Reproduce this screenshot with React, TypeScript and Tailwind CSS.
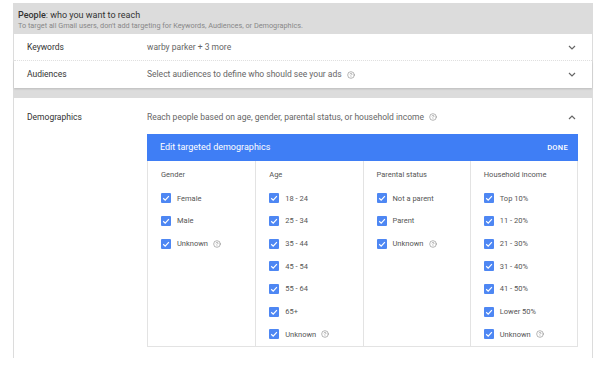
import { CircleHelp } from 'lucide-react';

const font = { fontFamily: 'Roboto, "Liberation Sans", sans-serif' };

const Chevron = ({ up = false }: { up?: boolean }) => (
  <div className="flex w-[12px] justify-center">
    <svg width="8" height="5" viewBox="0 0 8 5" className={up ? 'rotate-180' : ''}>
      <path d="M1 1 L4 4 L7 1" fill="none" stroke="#666" strokeWidth="1.2" />
    </svg>
  </div>
);

const Help = () => <CircleHelp size={8} strokeWidth={1.6} className="ml-[5px] text-[#777]" />;

const Check = () => (
  <svg width="10" height="10" viewBox="0 0 10 10" className="shrink-0">
    <rect x="0" y="0" width="10" height="10" rx="1" fill="#4e87f3" />
    <path d="M2.2 5.2 L4.2 7.1 L7.9 3.1" fill="none" stroke="#fff" strokeWidth="1.2" />
  </svg>
);

type Option = { label: string; help?: boolean };

const columns: { title: string; options: Option[] }[] = [
  { title: 'Gender', options: [{ label: 'Female' }, { label: 'Male' }, { label: 'Unknown', help: true }] },
  {
    title: 'Age',
    options: [
      { label: '18 - 24' },
      { label: '25 - 34' },
      { label: '35 - 44' },
      { label: '45 - 54' },
      { label: '55 - 64' },
      { label: '65+' },
      { label: 'Unknown', help: true },
    ],
  },
  { title: 'Parental status', options: [{ label: 'Not a parent' }, { label: 'Parent' }, { label: 'Unknown', help: true }] },
  {
    title: 'Household income',
    options: [
      { label: 'Top 10%' },
      { label: '11 - 20%' },
      { label: '21 - 30%' },
      { label: '31 - 40%' },
      { label: '41 - 50%' },
      { label: 'Lower 50%' },
      { label: 'Unknown', help: true },
    ],
  },
];

const Row = ({ label, children, className }: { label: string; children: React.ReactNode; className?: string }) => (
  <div className={`mx-px flex h-[27px] items-center bg-white pl-[13px] pr-[14px] text-[8.5px] ${className ?? ''}`}>
    <div className="w-[120px] text-[#333]">{label}</div>
    <div className="flex flex-1 items-center text-[#666]">{children}</div>
    <Chevron />
  </div>
);

export default function App() {
  return (
    <div className="h-[374px] w-[599px] overflow-hidden bg-white pl-[13px] pt-[3px]" style={font}>
      <div className="w-[580px] bg-[#dcdcdc]">
        <div className="h-[31px] pl-[5px] pt-[6px]">
          <div className="text-[9px] leading-[12px] text-[#333]">
            <span className="font-medium">People</span>: who you want to reach
          </div>
          <div className="text-[7.3px] leading-[10px] text-[#888]">
            To target all Gmail users, don't add targeting for Keywords, Audiences, or Demographics.
          </div>
        </div>

        <Row label="Keywords" className="border-b border-dotted border-[#e2e2e2]">
          warby parker + 3 more
        </Row>
        <Row label="Audiences" className="shadow-[0_1px_2px_rgba(0,0,0,0.15)]">
          Select audiences to define who should see your ads
          <Help />
        </Row>

        <div className="h-[10px]" />

        <div className="mx-px flex bg-white pb-[11px] pl-[13px] pr-[14px] pt-[13px] text-[8.5px]">
          <div className="w-[120px] leading-[12px] text-[#333]">Demographics</div>
          <div className="flex-1">
            <div className="flex h-[12px] items-center justify-between text-[#666]">
              <div className="flex items-center">
                Reach people based on age, gender, parental status, or household income
                <Help />
              </div>
              <Chevron up />
            </div>

            <div className="mt-[11px]">
              <div className="flex h-[27px] items-center justify-between bg-[#3f7ef5] pl-[13px] pr-[10px]">
                <span className="text-[9px] text-white">Edit targeted demographics</span>
                <span className="text-[7.5px] font-medium tracking-[0.3px] text-white">DONE</span>
              </div>
              <div className="grid grid-cols-4 border border-t-0 border-[#e3e3e3]">
                {columns.map((col, i) => (
                  <div key={col.title} className={`pl-[13px] pt-[8px] ${i > 0 ? 'border-l border-[#e3e3e3]' : ''}`}>
                    <div className="h-[12px] text-[7.5px] leading-[12px] text-[#555]">{col.title}</div>
                    <div className="mt-[6px]">
                      {col.options.map((o) => (
                        <div key={o.label} className="flex h-[22.7px] items-center">
                          <Check />
                          <span className="ml-[6px] text-[7.5px] text-[#555]">{o.label}</span>
                          {o.help && <Help />}
                        </div>
                      ))}
                    </div>
                  </div>
                ))}
              </div>
            </div>
          </div>
        </div>
      </div>
    </div>
  );
}
